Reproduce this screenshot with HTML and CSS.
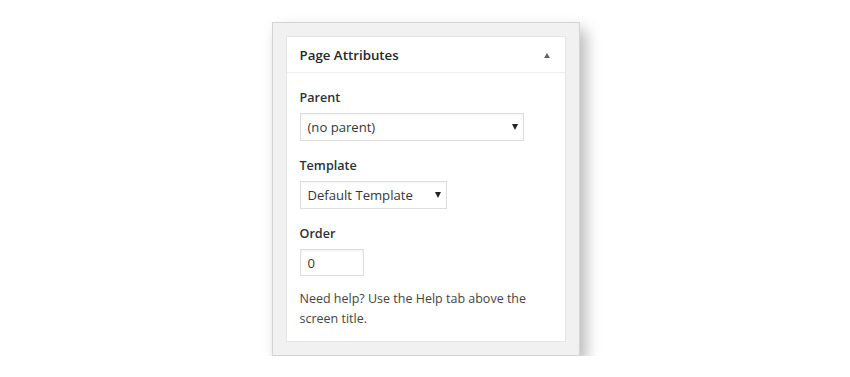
FILE: index.html
```html
<!DOCTYPE html>
<html lang="en">
<head>
    <meta charset="UTF-8">
    <meta name="viewport" content="width=device-width, initial-scale=1.0">
    <title>Page Attributes</title>
    <link rel="stylesheet" href="styles.css">
</head>
<body>
    <!-- Outer frame around the meta box -->
    <div class="frame">
        <div class="postbox">
            <div class="postbox-header">
                <h2>Page Attributes</h2>
                <span class="toggle"></span>
            </div>

            <div class="inside">
                <p class="field-label"><label for="parent">Parent</label></p>
                <div class="select-wrap wide">
                    <select id="parent" name="parent">
                        <option>(no parent)</option>
                    </select>
                    <span class="arrow"></span>
                </div>

                <p class="field-label"><label for="template">Template</label></p>
                <div class="select-wrap narrow">
                    <select id="template" name="template">
                        <option>Default Template</option>
                    </select>
                    <span class="arrow"></span>
                </div>

                <p class="field-label"><label for="order">Order</label></p>
                <input type="text" id="order" name="order" class="small-text" value="0">

                <p class="help">Need help? Use the Help tab above the screen title.</p>
            </div>
        </div>
    </div>
</body>
</html>
```

FILE: styles.css
```css
/* General page */
body {
    margin: 0;
    padding: 22px 0 0 1px;
    background: #ffffff;
    font-family: 'Open Sans', 'Noto Sans', sans-serif;
    font-size: 12.5px;
    color: #32373c;
    display: flex;
    justify-content: center;
}

/* Grey frame with the drop shadow */
.frame {
    width: 308px;
    box-sizing: border-box;
    padding: 13px;
    background: #f1f1f1;
    border: 1px solid #d4d4d4;
    box-shadow: 6px 8px 14px rgba(0, 0, 0, 0.28);
}

/* The meta box itself */
.postbox {
    background: #ffffff;
    border: 1px solid #e5e5e5;
}

.postbox-header {
    display: flex;
    align-items: center;
    justify-content: space-between;
    height: 35px;
    padding: 0 13px;
    border-bottom: 1px solid #eeeeee;
}

.postbox-header h2 {
    margin: 0;
    font-size: 13.3px;
    font-weight: 600;
    color: #23282d;
}

/* Collapse toggle triangle */
.toggle {
    width: 0;
    height: 0;
    margin: 1px 2px 0 0;
    border-left: 3.5px solid transparent;
    border-right: 3.5px solid transparent;
    border-bottom: 5px solid #5f656b;
}

.inside {
    padding: 0 13px 12px;
}

/* Labels */
.field-label {
    margin: 16px 0 6px;
    line-height: 18px;
    font-size: 12.6px;
    color: #2c3136;
}

.field-label label {
    font-weight: 600;
}

/* Select boxes */
.select-wrap {
    position: relative;
    height: 28px;
}

.select-wrap.wide {
    width: 224px;
}

.select-wrap.narrow {
    width: 147px;
}

.select-wrap select {
    appearance: none;
    -webkit-appearance: none;
    width: 100%;
    height: 28px;
    margin: 0;
    padding: 0 24px 0 7px;
    border: 1px solid #dddddd;
    border-radius: 0;
    background: #ffffff;
    font-family: 'Open Sans', 'Noto Sans', sans-serif;
    font-size: 13.1px;
    color: #32373c;
    box-shadow: inset 0 1px 2px rgba(0, 0, 0, 0.04);
}

.select-wrap .arrow {
    position: absolute;
    top: 11px;
    right: 6px;
    width: 0;
    height: 0;
    border-left: 3.5px solid transparent;
    border-right: 3.5px solid transparent;
    border-top: 6px solid #222222;
}

/* Order input */
.small-text {
    display: block;
    width: 64px;
    height: 27px;
    box-sizing: border-box;
    margin: 0;
    padding: 0 7px;
    border: 1px solid #dddddd;
    font-family: 'Open Sans', 'Noto Sans', sans-serif;
    font-size: 13.1px;
    color: #32373c;
    box-shadow: inset 0 1px 2px rgba(0, 0, 0, 0.07);
}

/* Help text */
.help {
    margin: 13px 0 0;
    line-height: 20px;
    color: #444444;
}
```
